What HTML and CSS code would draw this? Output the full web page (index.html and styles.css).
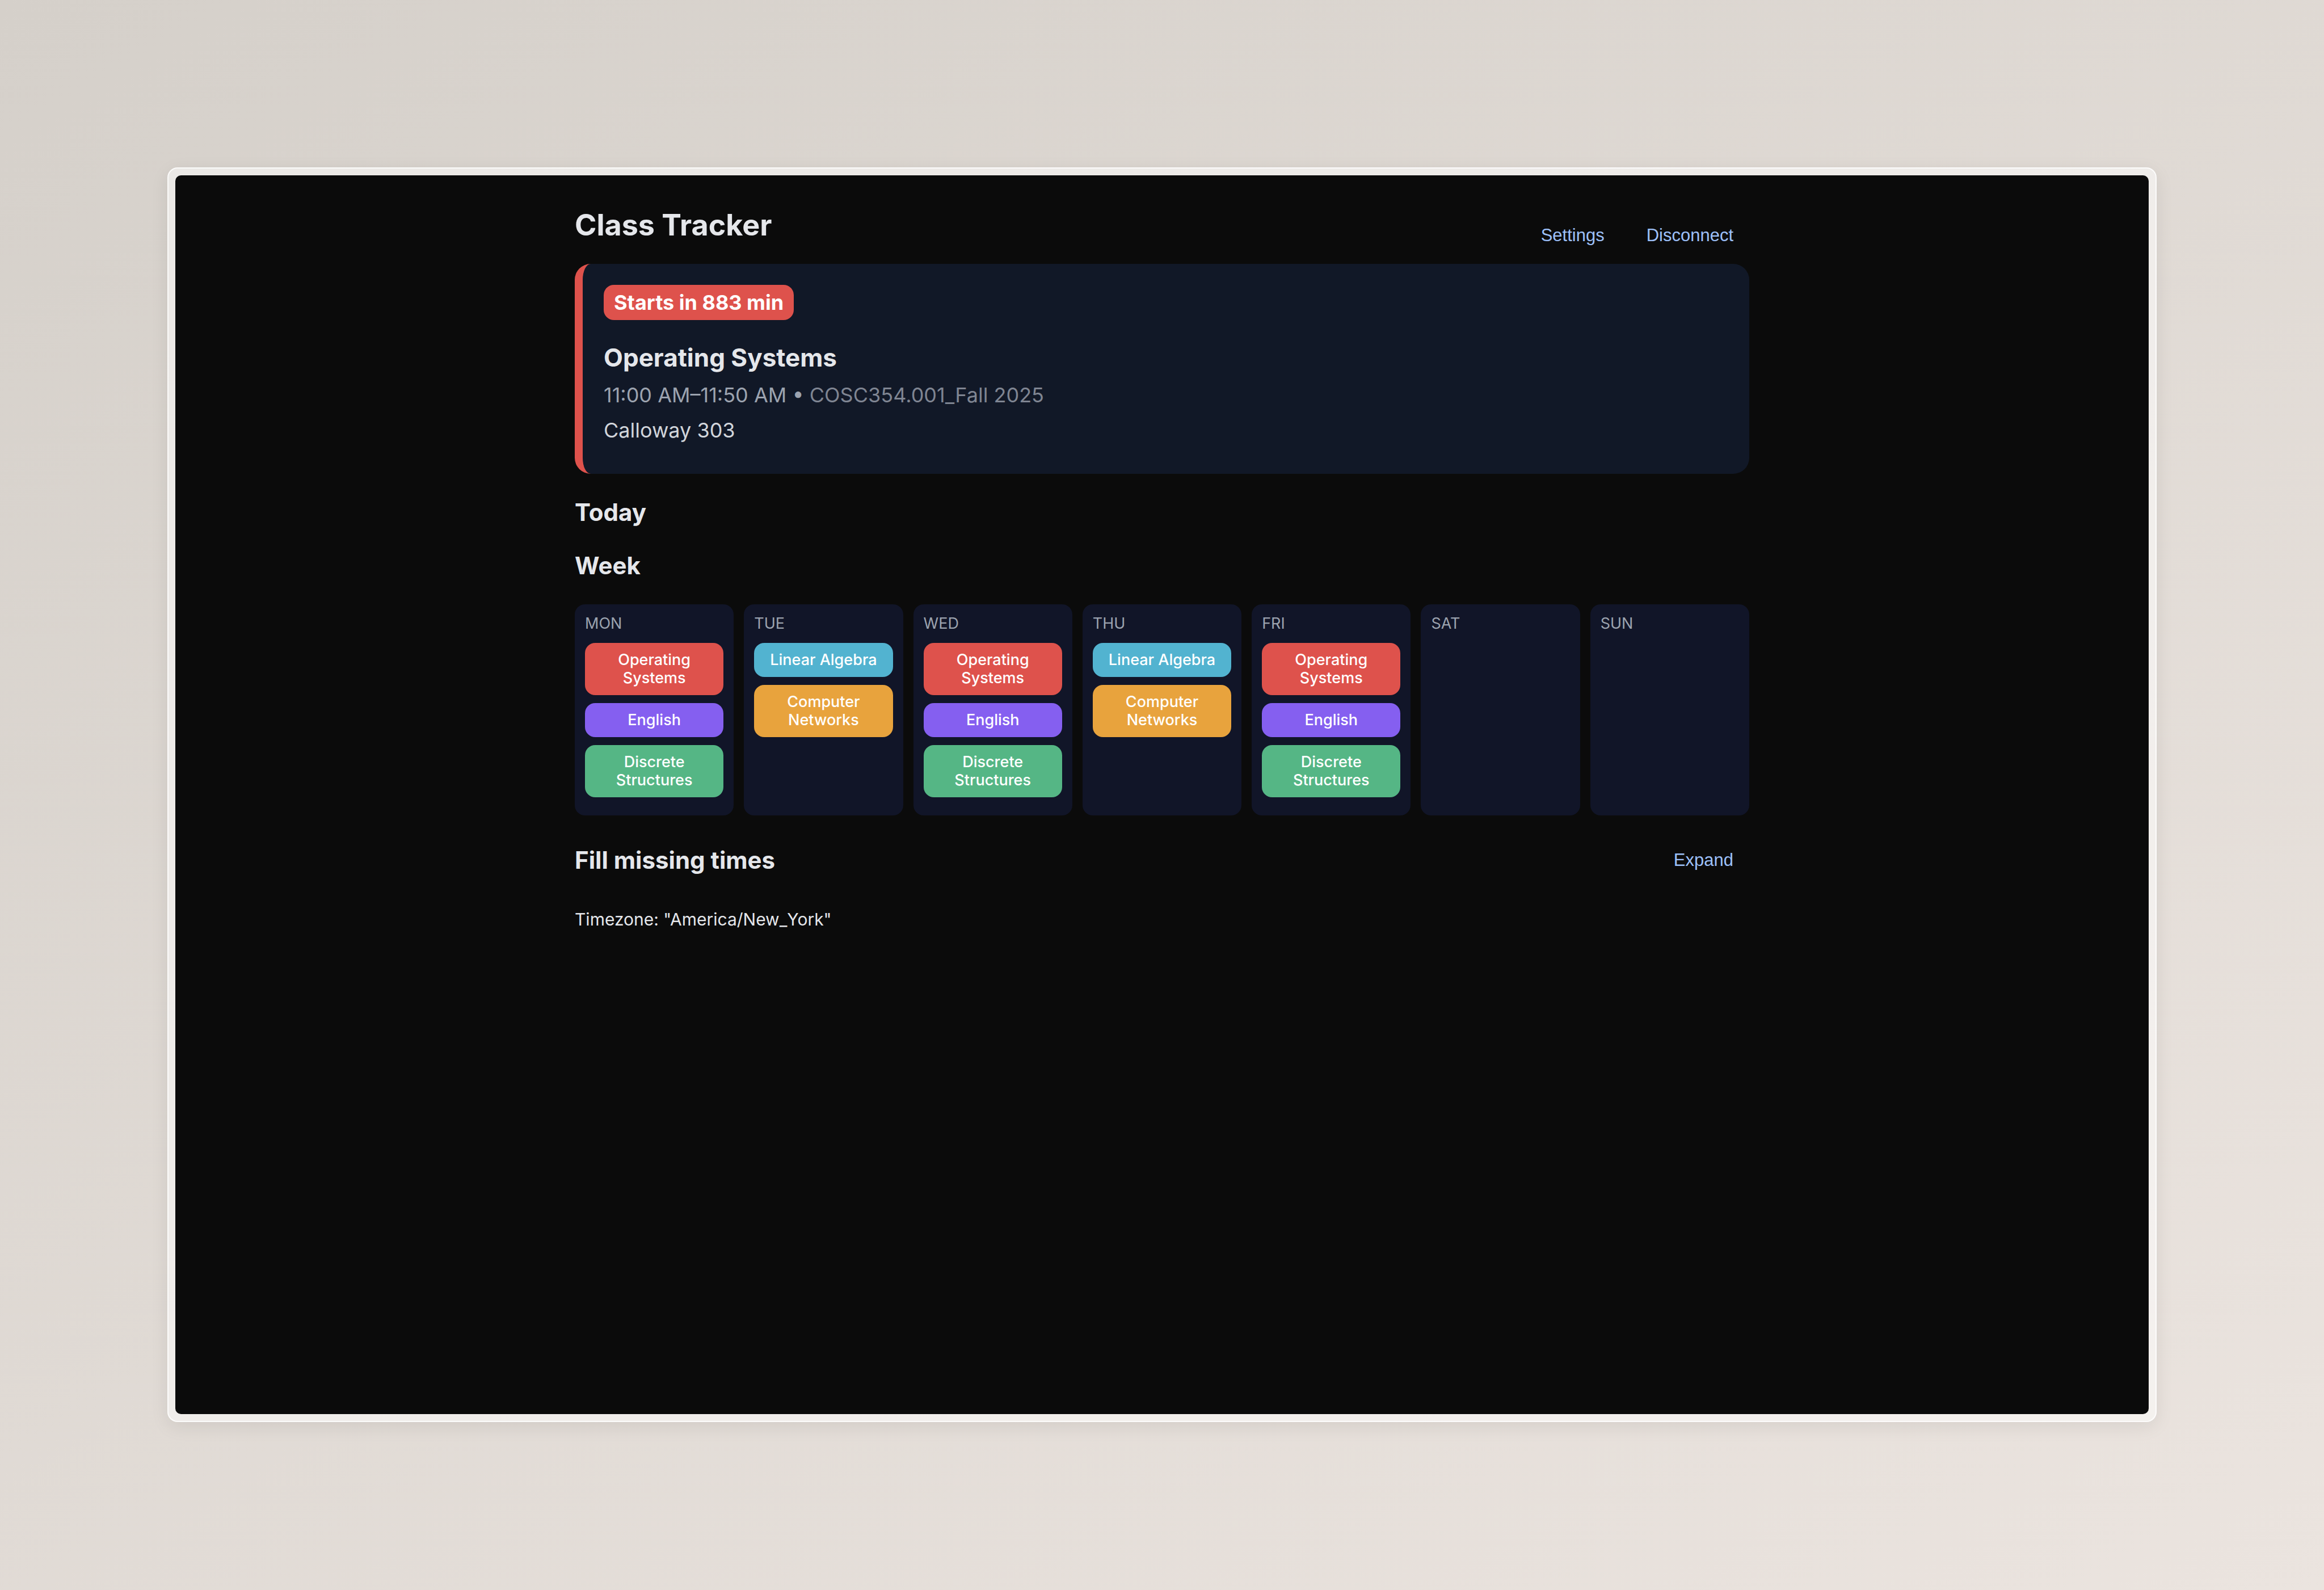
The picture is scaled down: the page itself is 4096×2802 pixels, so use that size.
FILE: index.html
```html
<!DOCTYPE html>
<html lang="en">
<head>
<meta charset="utf-8">
<title>Class Tracker</title>
<link rel="stylesheet" href="styles.css">
</head>
<body>
<div class="frame">
  <div class="window">
    <main class="container">
      <header class="header">
        <h1 class="title">Class Tracker</h1>
        <div class="actions">
          <button class="link-button" type="button">Settings</button>
          <button class="link-button" type="button">Disconnect</button>
        </div>
      </header>

      <section class="next">
        <span class="badge">Starts in 883 min</span>
        <h2 class="next-name">Operating Systems</h2>
        <p class="next-time">11:00 AM–11:50 AM • <span class="next-code">COSC354.001_Fall 2025</span></p>
        <p class="next-place">Calloway 303</p>
      </section>

      <h3 class="heading">Today</h3>
      <h3 class="heading">Week</h3>

      <div class="week">
        <section class="day">
          <h4 class="day-name">MON</h4>
          <div class="chip red">Operating Systems</div>
          <div class="chip purple">English</div>
          <div class="chip green">Discrete Structures</div>
        </section>
        <section class="day">
          <h4 class="day-name">TUE</h4>
          <div class="chip blue">Linear Algebra</div>
          <div class="chip orange">Computer Networks</div>
        </section>
        <section class="day">
          <h4 class="day-name">WED</h4>
          <div class="chip red">Operating Systems</div>
          <div class="chip purple">English</div>
          <div class="chip green">Discrete Structures</div>
        </section>
        <section class="day">
          <h4 class="day-name">THU</h4>
          <div class="chip blue">Linear Algebra</div>
          <div class="chip orange">Computer Networks</div>
        </section>
        <section class="day">
          <h4 class="day-name">FRI</h4>
          <div class="chip red">Operating Systems</div>
          <div class="chip purple">English</div>
          <div class="chip green">Discrete Structures</div>
        </section>
        <section class="day">
          <h4 class="day-name">SAT</h4>
        </section>
        <section class="day">
          <h4 class="day-name">SUN</h4>
        </section>
      </div>

      <div class="missing">
        <h3 class="missing-title">Fill missing times</h3>
        <button class="link-button" type="button">Expand</button>
      </div>

      <p class="timezone">Timezone: "America/New_York"</p>
    </main>
  </div>
</div>
</body>
</html>
```

FILE: styles.css
```css
* {
  box-sizing: border-box;
}

body {
  display: flex;
  min-height: 100vh;
  margin: 0;
  padding: 295px 295px 296px;
  background: linear-gradient(150deg, #d5d0ca, #ebe4df);
  color: #e5e7eb;
  font-family: Inter, "Liberation Sans", sans-serif;
}

h1, h2, h3, h4, p {
  margin: 0;
}

.frame {
  display: flex;
  flex: 1;
  padding: 12px;
  border: 2px solid rgba(255, 255, 255, 0.8);
  border-radius: 18px;
  background: rgba(255, 255, 255, 0.5);
  box-shadow: 0 8px 32px rgba(0, 0, 0, 0.08);
}

.window {
  flex: 1;
  padding: 56px 0;
  border-radius: 10px;
  background: #0b0b0b;
}

.container {
  max-width: 2070px;
  margin: 0 auto;
}

.header {
  display: flex;
  align-items: flex-end;
  justify-content: space-between;
  margin-bottom: 18px;
}

.title {
  margin-bottom: 18px;
  font-size: 52px;
  line-height: 64px;
}

.actions {
  display: flex;
  gap: 18px;
}

.link-button {
  padding: 14px 28px;
  border: 0;
  background: none;
  color: #9ec1fa;
  font-family: "Liberation Sans", Arial, sans-serif;
  font-size: 31px;
  line-height: 36px;
}

.next {
  padding: 37px;
  border-left: 14px solid #de524c;
  border-radius: 28px;
  background: #111827;
}

.badge {
  display: block;
  width: fit-content;
  padding: 9px 18px;
  border-radius: 18px;
  background: #de524c;
  color: #fff;
  font-size: 36px;
  font-weight: 700;
  line-height: 44px;
}

.next-name {
  margin: 38px 0 16px;
  font-size: 44px;
  line-height: 56px;
}

.next-time,
.next-place {
  margin-bottom: 18px;
  font-size: 36px;
  line-height: 44px;
}

.next-time {
  color: #9ca3af;
}

.next-code {
  color: #7f8592;
}

.next-place {
  color: #d1d5db;
}

.heading {
  margin: 42px 0;
  font-size: 42px;
  line-height: 52px;
}

.week {
  display: grid;
  grid-template-columns: repeat(7, 1fr);
  gap: 18px;
}

.day {
  padding: 18px 18px 32px;
  border-radius: 18px;
  background: #111528;
}

.day-name {
  margin-bottom: 18px;
  color: #9ca3af;
  font-size: 27px;
  font-weight: 400;
  line-height: 32px;
}

.chip {
  padding: 14px;
  border-radius: 18px;
  color: #fff;
  font-size: 27px;
  font-weight: 500;
  line-height: 32px;
  text-align: center;
}

.chip + .chip {
  margin-top: 14px;
}

.red {
  background: #de524c;
}

.purple {
  background: #855ff0;
}

.green {
  background: #55b685;
}

.blue {
  background: #52b3d0;
}

.orange {
  background: #e8a33d;
}

.missing {
  display: flex;
  align-items: center;
  justify-content: space-between;
  margin: 47px 0 54px;
}

.missing-title {
  font-size: 42px;
  line-height: 52px;
}

.timezone {
  font-size: 30px;
  line-height: 36px;
}
```
